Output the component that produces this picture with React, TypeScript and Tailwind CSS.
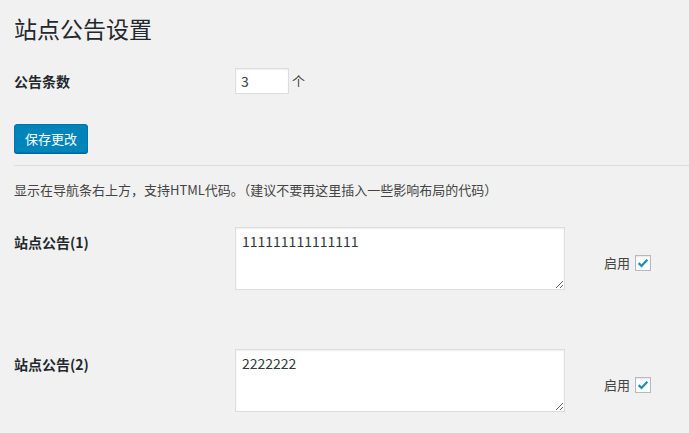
import React from "react";

const font = { fontFamily: '"Noto Sans CJK SC", "Noto Sans", sans-serif' };

const Check: React.FC = () => (
    <span className="flex h-4 w-4 items-center justify-center border border-[#b4b9be] bg-white shadow-[inset_0_1px_2px_rgba(0,0,0,0.1)]">
        <svg viewBox="0 0 16 16" className="h-[14px] w-[14px]">
            <path d="M3 8.2 L6.3 11.4 L13 4.2" fill="none" stroke="#1e8cbe" strokeWidth="2.6" strokeLinejoin="miter" />
        </svg>
    </span>
);

interface NoticeRowProps {
    label: string;
    num: number;
    value: string;
}

const NoticeRow: React.FC<NoticeRowProps> = ({ label, num, value }) => (
    <div className="flex items-start">
        <div className="w-[221px] pt-[5px] text-[14px] font-bold leading-5 text-[#23282d]">
            { label }<span className="font-semibold">({ num })</span>
        </div>
        <textarea
            readOnly
            defaultValue={ value }
            className="h-[63px] w-[330px] border border-[#ddd] bg-white px-[6px] py-[3px] text-[14px] leading-5 text-[#32373c] shadow-[inset_0_1px_2px_rgba(0,0,0,0.07)] outline-none"
            style={ font }
        />
        <label className="ml-[39px] mt-[26px] flex items-center gap-[5px] text-[13px] text-[#444]">
            启用
            <Check />
        </label>
    </div>
);

export default function App() {
    return (
        <div className="min-h-[433px] w-full bg-[#f1f1f1] pl-[14px] pt-[13px] text-[#23282d]" style={ font }>
            <h1 className="text-[23px] font-normal leading-[30px]">站点公告设置</h1>

            <div className="mt-[25px] flex items-center">
                <div className="w-[221px] text-[14px] font-bold">公告条数</div>
                <input
                    readOnly
                    defaultValue="3"
                    className="h-[26px] w-[54px] border border-[#ddd] bg-white px-[5px] text-[14px] text-[#32373c] shadow-[inset_0_1px_2px_rgba(0,0,0,0.07)] outline-none"
                    style={ font }
                />
                <span className="ml-[3px] text-[13px] text-[#444]">个</span>
            </div>

            <button className="mt-[30px] h-[29px] rounded-[3px] border border-[#0073aa] bg-[#0085ba] px-[10px] text-[13px] text-white shadow-[0_1px_0_#006799]">
                保存更改
            </button>

            <div className="mt-[12px] h-px bg-[#ddd]" />

            <p className="mt-[14px] text-[13px] leading-5 text-[#444]">
                显示在导航条右上方，支持HTML代码。（建议不要再这里插入一些影响布局的代码）
            </p>

            <div className="mt-[27px] flex flex-col gap-[59px]">
                <NoticeRow label="站点公告" num={ 1 } value="111111111111111" />
                <NoticeRow label="站点公告" num={ 2 } value="2222222" />
            </div>
        </div>
    );
}
